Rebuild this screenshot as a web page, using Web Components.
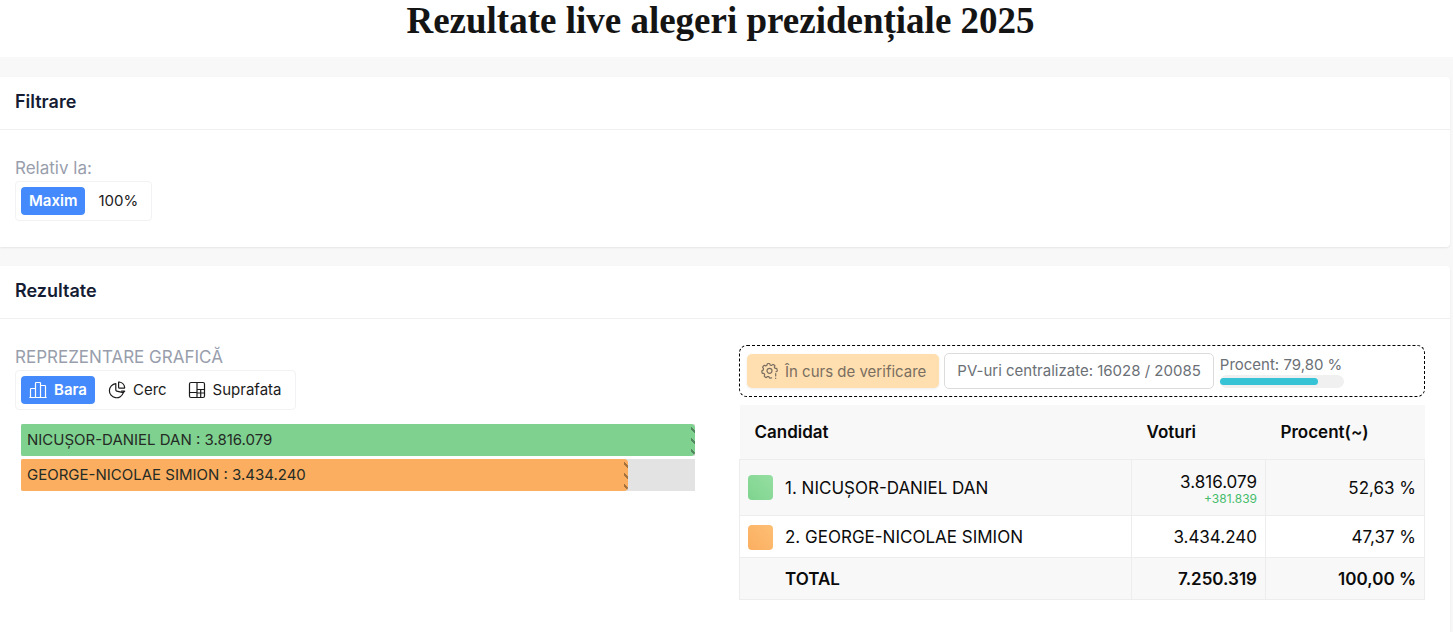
<!DOCTYPE html>
<html lang="ro">
<head>
<meta charset="utf-8">
<meta name="viewport" content="width=device-width, initial-scale=1">
<title>Rezultate live alegeri prezidențiale 2025</title>
<style>
  html { background: #f8f8f8; }
  body { margin: 0; font-family: Inter, "Liberation Sans", sans-serif; color: #111; }
</style>
</head>
<body>
<election-page></election-page>

<script>
const define = (name, html, setup) => {
  const template = document.createElement('template');
  template.innerHTML = html;
  customElements.define(name, class extends HTMLElement {
    connectedCallback() {
      if (this.shadowRoot) return;
      const root = this.attachShadow({ mode: 'open' });
      root.append(template.content.cloneNode(true));
      if (setup) setup.call(this, root);
    }
  });
};

define('page-title', `
<style>
  :host { display: block; background: #fff; padding-bottom: 16px; }
  h1 { margin: 0; padding-right: 12px; text-align: center; font: 700 37px/41px "Liberation Serif", serif; color: #141414; }
</style>
<h1><slot></slot></h1>`);

define('panel-card', `
<style>
  :host { display: block; margin-right: 3px; background: #fff; border-radius: 0 4px 4px 0; box-shadow: 0 1px 2px rgba(0,0,0,.08); }
  header { box-sizing: border-box; height: 53px; padding: 0 15px 2px; border-bottom: 1px solid #efefef; display: flex; align-items: center; }
  h2 { margin: 0; font-size: 18px; line-height: 24px; font-weight: 600; color: #141c33; }
  .body { padding: 26px 25px 26px 15px; }
</style>
<header><h2><slot name="title"></slot></h2></header>
<div class="body"><slot></slot></div>`);

define('ui-icon', `
<style>
  :host { display: inline-flex; }
  svg { width: 18px; height: 18px; fill: none; stroke: currentColor; stroke-width: 1.2; stroke-linejoin: round; stroke-linecap: round; }
</style>
<svg viewBox="0 0 18 18" aria-hidden="true"></svg>`, function (root) {
  root.querySelector('svg').innerHTML = {
    bars: '<path d="M1.500 16.500V8.200q0-.7.7-.7h4.300M6.500 16.500V2.200q0-.7.7-.7h3.600q.7 0 .7.7v14.300M11.500 4.500h4.300q.7 0 .7.7v11.300M.8 16.500h16.400"/>',
    pie: '<path d="M7.800 2.600A7.100 7.100 0 1 0 15.300 11.700L8.700 10.200q-.9-.2-.9-1.100z"/><path d="M10.600 1.500q0-.6.6-.5a6.500 6.500 0 0 1 5.500 5.600q0 .6-.6.6h-4.600q-.9 0-.9-.9zM15.300 11.700l1.400-1.600h-3.200"/>',
    area: '<rect x="1.500" y="1.500" width="15" height="15" rx="1.500"/><path d="M9 1.500v15M1.500 11.500h7.500M9 8.500h7.500M12.700 8.500v8M9 12h7.500"/>',
    gear: '<path d="M15 9.800l1-.5q.4-.3.200-.8l-.3-1.600q-.1-.5-.6-.5l-1.200 0-.8-1.200.5-1.100q.2-.5-.2-.7l-1.300-.9q-.5-.3-.8.100l-.8.800-1.500-.3-.4-1.100q-.1-.5-.6-.5H7q-.6 0-.7.500l-.4 1.200-1.200.7-1.100-.5q-.5-.2-.8.200l-1 1.300q-.3.400 0 .8l.7 1-.3 1.400-1 .5q-.5.200-.4.700l.3 1.600q.1.500.6.500h1.200l.8 1.200-.4 1.100q-.2.500.2.800l1.300.9q.4.300.8-.1l.9-.8 1.400.2.500 1.100q.2.400.7.300l1.500-.2"/><circle cx="8.500" cy="8.800" r="2.500"/><path d="M14.700 11.500v2.500M14.700 16.200v.3"/>'
  }[this.getAttribute('name')];
});

define('segment-group', `
<style>
  :host { display: block; }
  .label { display: block; font-size: 17px; line-height: 25px; color: #989eac; }
  .box { display: inline-flex; gap: 5px; box-sizing: border-box; height: 40px; padding: 5px; border: 1px solid #f2f2f4; border-radius: 4px; vertical-align: top; }
  label { display: flex; align-items: center; gap: 7px; padding: 0 8px; border-radius: 4px; font-size: 15px; line-height: 28px; color: #1b1b1b; cursor: pointer; white-space: nowrap; }
  .option { position: relative; display: flex; }
  input { position: absolute; opacity: 0; margin: 0; }
  input:checked + label { background: #458afc; color: #fff; font-weight: 600; }
  input:focus-visible + label { outline: 2px solid #1c4fb0; }
</style>
<span class="label" id="caption"></span>
<div class="box" role="radiogroup" aria-labelledby="caption"></div>`, function (root) {
  root.querySelector('.label').textContent = this.getAttribute('label');
  const icons = (this.getAttribute('icons') || '').split(',');
  root.querySelector('.box').innerHTML = this.getAttribute('options').split(',').map((text, i) => `
    <div class="option"><input type="radio" name="choice" id="o${i}" ${i ? '' : 'checked'}>
    <label for="o${i}">${icons[i] ? `<ui-icon name="${icons[i]}"></ui-icon>` : ''}<span>${text}</span></label></div>`).join('');
});

define('vote-bar', `
<style>
  :host { display: block; height: 32px; background: #e3e3e3; color: #252b25; }
  .fill { box-sizing: border-box; width: var(--size); height: 100%; padding: 0 6px 2px; display: flex; align-items: center;
    border-radius: 2px 4px 4px 2px; font-size: 15px; white-space: nowrap;
    background: repeating-linear-gradient(45deg, transparent 0 3px, rgba(0,0,0,.35) 3px 5px, transparent 5px 8px) right / 4px 100% no-repeat, var(--tone); }
</style>
<div class="fill"><slot></slot></div>`);

define('status-strip', `
<style>
  :host { display: flex; align-items: center; gap: 5px; box-sizing: border-box; height: 52px; padding: 0 7px; border: 1px dashed #000; border-radius: 8px; font-size: 15px; color: #6b7076; white-space: nowrap; }
  .tag { display: flex; align-items: center; gap: 6px; height: 34px; padding: 0 13px 0 14px; border-radius: 5px; background: #ffdfb0; box-shadow: 0 1px 3px rgba(0,0,0,.08); color: #7a6e60; }
  .count { box-sizing: border-box; height: 36px; padding: 0 12px; border: 1px solid #dcdcdc; border-radius: 5px; line-height: 34px; }
  .progress { width: 124px; margin-left: 1px; }
  .progress span { display: block; line-height: 20px; }
  .track { display: flex; align-items: center; height: 13px; border-radius: 7px; background: #f0f0f1; }
  .track i { width: 79%; height: 7px; border-radius: 4px; background: #35c3d5; }
</style>
<div class="tag"><ui-icon name="gear"></ui-icon><span>În curs de verificare</span></div>
<div class="count">PV-uri centralizate: 16028 / 20085</div>
<div class="progress"><span id="p">Procent: 79,80 %</span>
<div class="track" role="progressbar" aria-labelledby="p" aria-valuenow="79.8" aria-valuemin="0" aria-valuemax="100"><i></i></div></div>`);

define('results-table', `
<style>
  :host { display: block; }
  table { width: 100%; table-layout: fixed; border-collapse: collapse; font-size: 17px; line-height: 22px; color: #0b0b0b; }
  .votes { width: 134px; } .share { width: 159px; }
  th, td { box-sizing: border-box; padding: 0 8px; }
  thead th { height: 54px; padding: 0 15px; text-align: left; font-weight: 600; }
  thead, tbody tr:nth-child(odd) { background: #f8f8f8; }
  tbody td, tbody th { height: 42px; padding-top: 2px; border: 1px solid #ededed; text-align: right; font-weight: 400; white-space: nowrap; }
  tbody tr:first-child > * { height: 56px; padding-top: 1px; }
  tbody th { text-align: left; }
  .name { display: flex; align-items: center; gap: 12px; }
  .swatch { width: 25px; height: 25px; border-radius: 4px; }
  .green { background: linear-gradient(45deg, #7fd38e, #95dfa2); }
  .orange { background: linear-gradient(45deg, #fbae60, #fdbf74); }
  small { display: block; font-size: 12px; line-height: 11px; color: #45bd6b; }
  tbody tr.total > * { font-weight: 600; }
</style>
<table>
  <colgroup><col><col class="votes"><col class="share"></colgroup>
  <thead><tr><th scope="col">Candidat</th><th scope="col">Voturi</th><th scope="col">Procent(~)</th></tr></thead>
  <tbody>
    <tr><th scope="row"><div class="name"><span class="swatch green"></span><span>1. NICUȘOR-DANIEL DAN</span></div></th><td>3.816.079<small>+381.839</small></td><td>52,63 %</td></tr>
    <tr><th scope="row"><div class="name"><span class="swatch orange"></span><span>2. GEORGE-NICOLAE SIMION</span></div></th><td>3.434.240</td><td>47,37 %</td></tr>
    <tr class="total"><th scope="row"><div class="name"><span class="swatch"></span><span>TOTAL</span></div></th><td>7.250.319</td><td>100,00 %</td></tr>
  </tbody>
</table>`);

define('election-page', `
<style>
  :host { display: block; }
  main { display: grid; gap: 19px; padding-top: 20px; }
  .results { display: grid; grid-template-columns: 1fr 1fr; gap: 38px; align-items: start; padding-bottom: 16px; }
  .bars { display: grid; gap: 3px; padding: 14px 6px 0; }
  .side { display: grid; gap: 8px; }
</style>
<page-title>Rezultate live alegeri prezidențiale 2025</page-title>
<main>
  <panel-card>
    <span slot="title">Filtrare</span>
    <segment-group label="Relativ la:" options="Maxim,100%"></segment-group>
  </panel-card>
  <panel-card>
    <span slot="title">Rezultate</span>
    <div class="results">
      <section>
        <segment-group label="REPREZENTARE GRAFICĂ" options="Bara,Cerc,Suprafata" icons="bars,pie,area"></segment-group>
        <div class="bars">
          <vote-bar style="--size:100%;--tone:#7fd190">NICUȘOR-DANIEL DAN : 3.816.079</vote-bar>
          <vote-bar style="--size:90%;--tone:#fbae60">GEORGE-NICOLAE SIMION : 3.434.240</vote-bar>
        </div>
      </section>
      <section class="side">
        <status-strip></status-strip>
        <results-table></results-table>
      </section>
    </div>
  </panel-card>
</main>`);
</script>
</body>
</html>
